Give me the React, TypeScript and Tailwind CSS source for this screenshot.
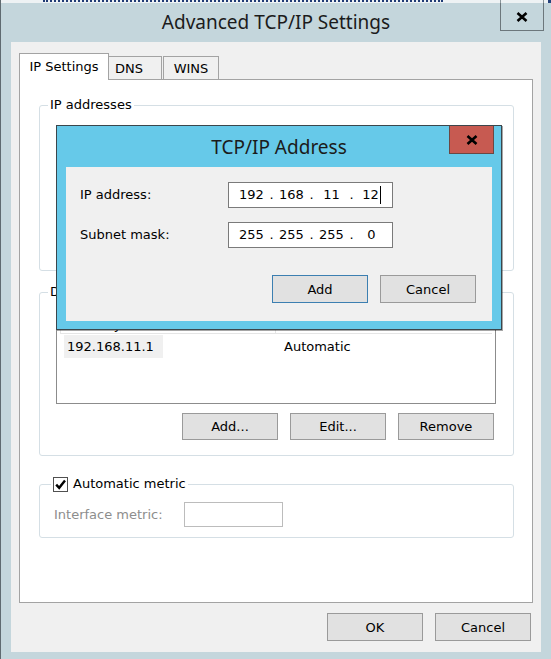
import React from 'react';

type BtnProps = { label: string; def?: boolean; h?: string };

const Btn: React.FC<BtnProps> = ({ label, def = false, h = 'h-[28px]' }) => (
  <button
    className={`${h} w-[96px] border bg-[#e1e1e1] text-[13px] leading-none text-black ${
      def ? 'border-[#3c7fb1]' : 'border-[#9a9a9a]'
    }`}
  >
    {label}
  </button>
);

const IpField: React.FC<{ parts: string[]; cursor?: boolean }> = ({ parts, cursor }) => (
  <div className="flex h-[26px] w-[165px] items-center border border-[#7a7a7a] bg-white pl-[9px] text-[13px] text-black">
    {parts.map((p, i) => (
      <React.Fragment key={i}>
        {i > 0 && <span className="w-[13px] text-center">.</span>}
        <span className="flex w-[27px] items-center justify-center">
          {p}
          {cursor && i === parts.length - 1 && <span className="ml-px inline-block h-[18px] w-px bg-black" />}
        </span>
      </React.Fragment>
    ))}
  </div>
);

const CloseX: React.FC = () => (
  <svg width="12" height="10" viewBox="0 0 12 10">
    <path d="M1.5 1 L10.5 9 M10.5 1 L1.5 9" stroke="#000" strokeWidth="2.6" />
  </svg>
);

export default function App() {
  return (
    <div className="relative h-[659px] w-[551px] overflow-hidden border-l border-[#5f6a70] bg-[#c4d6dc] font-['DejaVu_Sans',sans-serif] text-[13px] text-black">
      {/* window behind, only its bottom edge shows */}
      <div className="flex h-[3px] overflow-hidden bg-[#eef2f4]">
        <span className="ml-[42px] h-[2px] w-[400px] border-b-2 border-dotted border-[#1f3b75]" />
        <span className="ml-auto h-full w-px bg-[#8b979c]" />
        <span className="ml-[42px] h-full w-px bg-[#8b979c]" />
        <span className="ml-[4px] h-full w-[3px] bg-[#23407a]" />
      </div>

      {/* title bar */}
      <div className="grid h-[39px] grid-cols-[1fr_auto_1fr] items-start">
        <div />
        <div className="pt-[6px] font-['Noto_Sans',sans-serif] text-[19px] leading-[26px] text-[#1b1b1b]">
          Advanced TCP/IP Settings
        </div>
        <div className="flex justify-end pr-[7px]">
          <div className="flex h-[28px] w-[44px] items-center justify-center border border-t-0 border-[#6c777c]">
            <CloseX />
          </div>
        </div>
      </div>

      {/* client area */}
      <div className="ml-[10px] flex h-[610px] w-[530px] flex-col bg-[#f0f0f0] px-[8px] pt-[11px]">
        {/* tabs */}
        <div className="flex h-[26px] items-end">
          <div className="relative z-10 -mb-px h-[27px] w-[90px] border border-b-0 border-[#a3a3a3] bg-white pt-[5px] text-center leading-[16px]">
            IP Settings
          </div>
          <div className="h-[23px] w-[53px] border-r border-t border-[#a3a3a3] pl-[6px] pt-[4px] leading-[16px]">DNS</div>
          <div className="ml-[1px] h-[23px] w-[56px] border border-b-0 border-[#a3a3a3] pt-[4px] text-center leading-[16px]">
            WINS
          </div>
        </div>

        {/* tab page */}
        <div className="flex h-[524px] flex-col border border-[#a3a3a3] bg-white pl-[19px] pr-[18px] pt-[17px]">
          <fieldset className="rounded-[3px] border border-[#d5dfe5]">
            <legend className="ml-[8px] px-[2px] leading-[16px]">IP addresses</legend>
            {/* list and buttons of this group sit under the dialog */}
            <div className="h-[157px]" />
          </fieldset>

          <fieldset className="mt-[13px] rounded-[3px] border border-[#d5dfe5]">
            <legend className="ml-[8px] px-[2px] leading-[16px]">Default gateways:</legend>
            <div className="pb-[15px] pl-[16px] pr-[16px] pt-[14px]">
              <div className="mr-[1px] h-[90px] border border-[#8c8c8c]">
                <div className="mx-[3px] grid h-[19px] grid-cols-[216px_1fr] border-b border-[#e5e5e5] leading-[19px]">
                  <div className="border-l border-r border-[#e5e5e5] pl-[3px]">Gateway</div>
                  <div className="pl-[6px]">Metric</div>
                </div>
                <div className="mt-px grid grid-cols-[219px_1fr] leading-[23px]">
                  <div className="pl-[7px]">
                    <span className="inline-block w-[99px] bg-[#f0f0f0] pl-[3px]">192.168.11.1</span>
                  </div>
                  <div className="pl-[8px]">Automatic</div>
                </div>
              </div>
              <div className="mr-[3px] mt-[9px] flex justify-end gap-[12px]">
                <Btn label="Add..." h="h-[27px]" />
                <Btn label="Edit..." h="h-[27px]" />
                <Btn label="Remove" h="h-[27px]" />
              </div>
            </div>
          </fieldset>

          <fieldset className="mt-[20px] rounded-[3px] border border-[#d5dfe5]">
            <legend className="ml-[11px] flex h-[16px] items-center gap-[5px] px-[2px]">
              <span className="flex h-[15px] w-[15px] items-center justify-center border border-[#505050] bg-white">
                <svg width="13" height="13" viewBox="0 0 13 13">
                  <path d="M2.2 6.6 L5.2 9.8 L11 2.6" fill="none" stroke="#000" strokeWidth="2.4" />
                </svg>
              </span>
              <span className="leading-[16px]">Automatic metric</span>
            </legend>
            <div className="flex items-center pb-[10px] pl-[14px] pt-[10px]">
              <span className="w-[130px] text-[#8d8d8d]">Interface metric:</span>
              <div className="h-[25px] w-[99px] border border-[#bcbcbc] bg-white" />
            </div>
          </fieldset>
        </div>

        <div className="mr-[2px] mt-[10px] flex justify-end gap-[12px]">
          <Btn label="OK" />
          <Btn label="Cancel" />
        </div>
      </div>

      {/* TCP/IP Address dialog */}
      <div className="absolute left-[55px] top-[125px] z-20 flex h-[205px] w-[446px] flex-col border border-[#3b464c] bg-[#66c9e9] shadow-[1px_1px_0_rgba(0,0,0,0.35)]">
        <div className="grid h-[41px] grid-cols-[1fr_auto_1fr] items-start">
          <div />
          <div className="pt-[8px] font-['Noto_Sans',sans-serif] text-[19px] leading-[26px] text-[#1b1b1b]">
            TCP/IP Address
          </div>
          <div className="flex justify-end pr-[7px]">
            <div className="flex h-[28px] w-[45px] items-center justify-center border border-t-0 border-[#6b4743] bg-[#c75a51]">
              <CloseX />
            </div>
          </div>
        </div>
        <div className="mx-[9px] flex flex-1 flex-col bg-[#f0f0f0] pl-[14px] pr-[16px] pt-[15px]">
          <div className="flex items-center">
            <span className="w-[148px]">IP address:</span>
            <IpField parts={['192', '168', '11', '12']} cursor />
          </div>
          <div className="mt-[14px] flex items-center">
            <span className="w-[148px]">Subnet mask:</span>
            <IpField parts={['255', '255', '255', '0']} />
          </div>
          <div className="mt-[27px] flex justify-end gap-[12px]">
            <Btn label="Add" def />
            <Btn label="Cancel" />
          </div>
        </div>
        <div className="h-[8px]" />
      </div>
    </div>
  );
}
